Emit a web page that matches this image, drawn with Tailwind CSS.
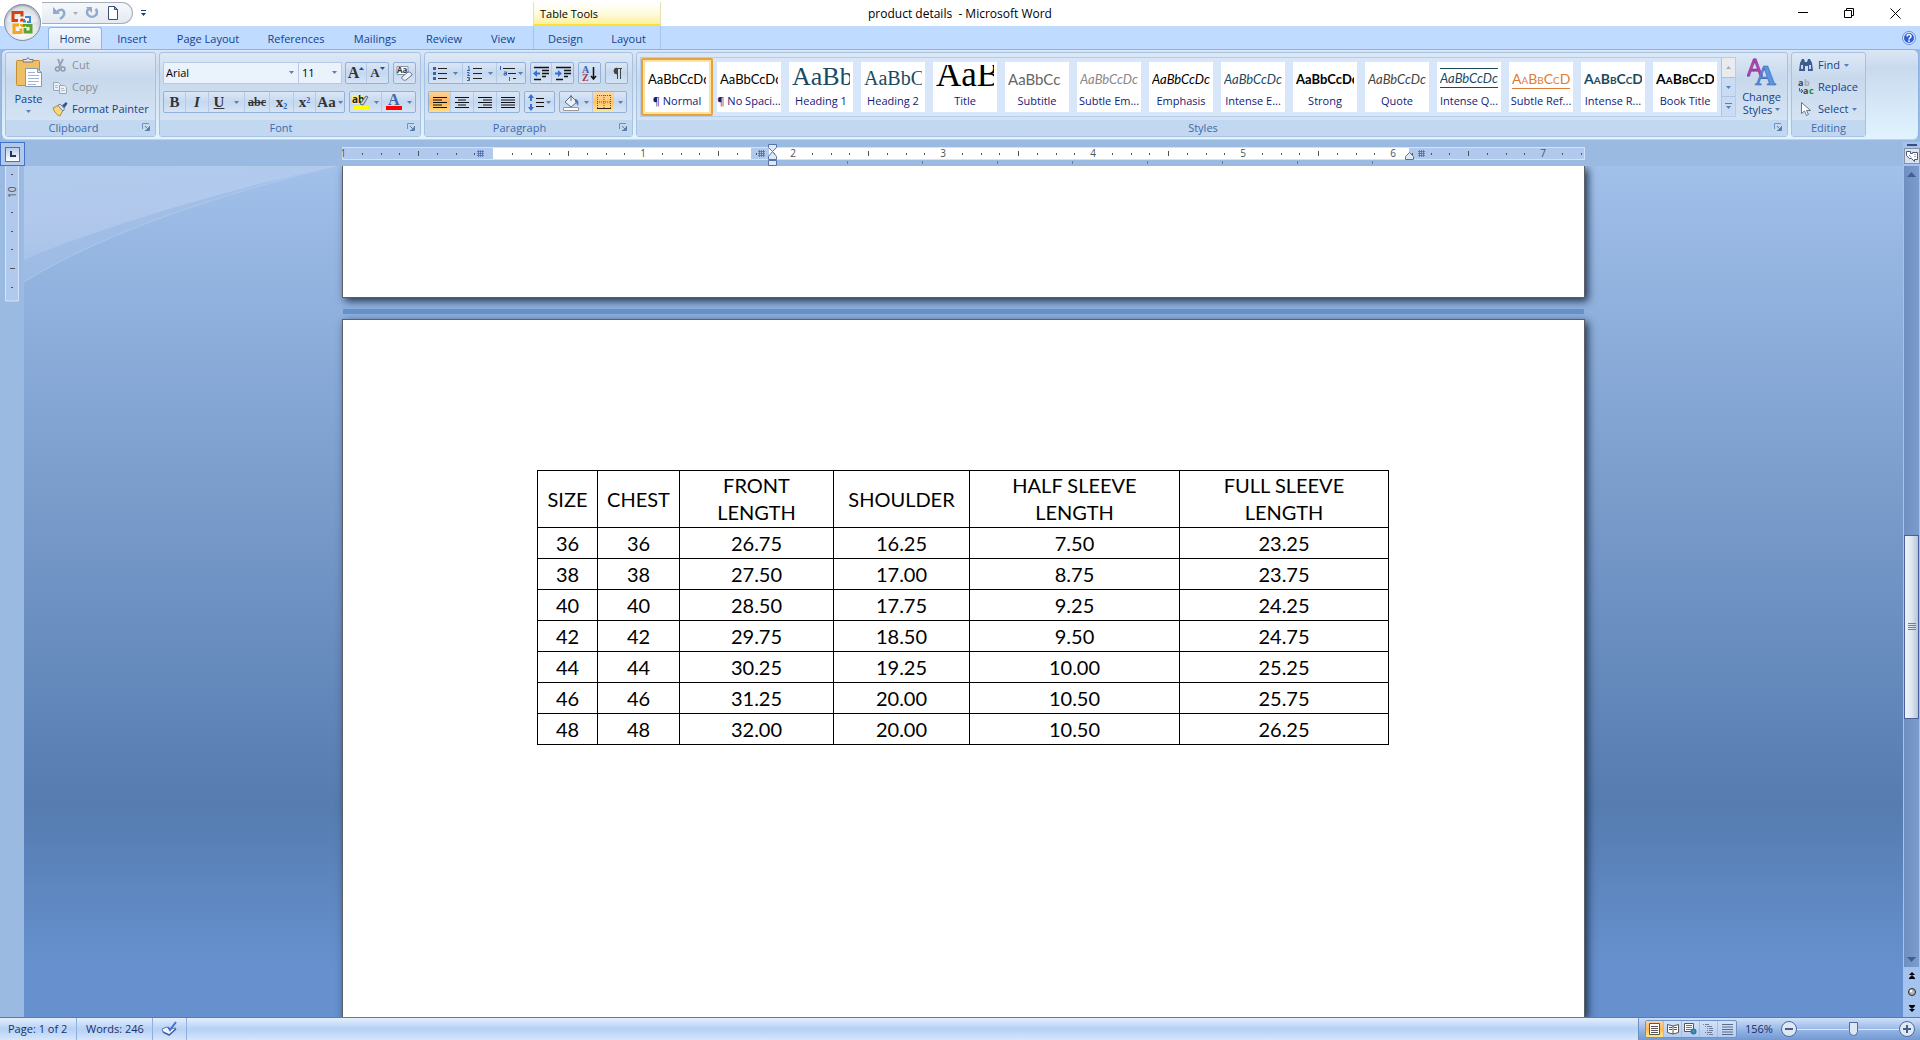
<!DOCTYPE html>
<html lang="en">
<head>
    <meta charset="UTF-8">
    <meta name="viewport" content="width=device-width, initial-scale=1.0">
    <title>product details - Microsoft Word</title>
    <script src="https://cdn.jsdelivr.net/npm/@tailwindcss/browser@4"></script>
</head>
<body class="h-screen flex flex-col overflow-hidden bg-[#9bbae2] font-['Open_Sans','Noto_Sans',sans-serif] text-[11px] leading-4 text-[#15428b]">

    <!-- shared symbols -->
    <svg class="hidden">
        <symbol id="down" viewBox="0 0 5 3"><path d="M0 0h5L2.5 3z" fill="#5a7fb5"/></symbol>
        <symbol id="launch" viewBox="0 0 8 8"><path d="M.5 6V.5H7" fill="none" stroke="#6f93c0"/><path d="M3 3l3 3M7.5 3v4.500H3" fill="none" stroke="#5b7da8"/><path d="M7 4v3H4z" fill="#5b7da8"/></symbol>
        <symbol id="grid" viewBox="0 0 7 7"><path d="M1.500 0v7M3.500 0v7M5.500 0v7M0 1.500h7M0 3.500h7M0 5.500h7" stroke="#4c6fa8" stroke-width=".8" fill="none"/></symbol>
    </svg>

    <!-- title bar -->
    <header class="relative h-[26px] shrink-0 flex bg-white text-black">
        <div class="w-[533px] flex items-center pl-[42px] pt-[2px] pb-[2px]">
            <div class="h-[22px] w-[91px] pl-[10px] flex items-center gap-[7px] rounded-r-full border border-l-0 border-[#a5adb9] bg-gradient-to-b from-[#f6f8fb] to-[#e4eaf2]">
                <button aria-label="Undo"><svg width="14" height="14" viewBox="0 0 14 14"><path d="M5 7c1-4 6-4 7-1 1 3-1 5-4 7" fill="none" stroke="#91a9cc" stroke-width="2.500"/><path d="M1 1v7h7z" fill="#91a9cc"/></svg></button>
                <button aria-label="Undo history"><svg width="5" height="3"><path d="M0 0h5L2.500 3z" fill="#a8adb5"/></svg></button>
                <button aria-label="Repeat"><svg width="14" height="14" viewBox="0 0 14 14"><path d="M10.500 3a5 4.500 0 1 1-7 0" fill="none" stroke="#91a9cc" stroke-width="2.500"/><path d="M7 1v6L1 1z" fill="#91a9cc"/></svg></button>
                <button aria-label="New"><svg width="14" height="14" viewBox="0 0 14 14"><path d="M2.500.5h6l3 3v10h-9z" fill="#fff" stroke="#3b4f73"/><path d="M8.500.5v3h3z" fill="#9fb4d4" stroke="#3b4f73"/></svg></button>
            </div>
            <button aria-label="Customize Quick Access Toolbar" class="ml-2"><svg width="5" height="7"><path d="M0 .5h5" stroke="#1b3a78"/><path d="M0 3h5L2.500 6z" fill="#1b3a78"/></svg></button>
        </div>
        <div class="w-[128px] mt-[2px] pl-[6px] pt-[2px] flex items-center border-x border-[#e6e0b4] border-b-2 border-b-[#fbe32c] bg-gradient-to-b from-white via-[#fffbe0] to-[#fdf0a0]">Table Tools</div>
        <h1 class="absolute inset-x-0 top-[6px] text-center text-[12px] pointer-events-none">product details &nbsp;- Microsoft Word</h1>
        <div class="ml-auto mr-[2px] flex">
            <button aria-label="Minimize" class="w-[46px] flex items-center justify-center"><svg width="10" height="10"><path d="M0 4.500h10" stroke="#000"/></svg></button>
            <button aria-label="Restore" class="w-[46px] flex items-center justify-center"><svg width="10" height="10"><path d="M.5 2.500h7v7h-7zM2.500 2.500v-2h7v7h-2" fill="none" stroke="#000"/></svg></button>
            <button aria-label="Close" class="w-[46px] flex items-center justify-center"><svg width="11" height="11"><path d="M.5.5l10 10M10.500.5l-10 10" stroke="#000"/></svg></button>
        </div>
        <button aria-label="Office" class="absolute left-[3px] top-[3px] z-10">
            <svg width="39" height="39" viewBox="0 0 39 39">
                <defs><radialGradient id="orb" cx=".5" cy=".75" r=".8"><stop offset="0" stop-color="#fff"/><stop offset=".5" stop-color="#e3e6eb"/><stop offset="1" stop-color="#a3aab6"/></radialGradient></defs>
                <circle cx="19.500" cy="19.500" r="18" fill="url(#orb)" stroke="#7f8b9d"/>
                <path d="M4 19a15.500 15.500 0 0 1 31 0z" fill="#fff" opacity=".45"/>
                <g fill="none" stroke-width="3">
                    <path d="M15 17.500h-5v-8h9v4" stroke="#d9420e"/>
                    <path d="M22 14h5v5h-3" stroke="#3f86d8" stroke-width="2"/>
                    <path d="M17 17.500h2v-2" stroke="#d9420e" stroke-width="2"/>
                    <path d="M21 16v2.500h2" stroke="#3f86d8" stroke-width="2"/>
                    <path d="M16 22h-5v7.500h7v-4" stroke="#f5a61d"/>
                    <path d="M17 22h2v2" stroke="#f5a61d" stroke-width="2"/>
                    <path d="M23 22.500h5v6.500h-6v-4" stroke="#5aa62c"/>
                    <path d="M21 24v-2h2" stroke="#5aa62c" stroke-width="2"/>
                </g>
            </svg>
        </button>
    </header>

    <!-- tabs -->
    <nav class="h-[23px] shrink-0 flex items-stretch pl-[48px] pr-[4px] bg-[#bfdbff]">
        <a href="#" class="w-[54px] mt-px pt-px z-10 flex items-center justify-center rounded-t-[3px] border border-b-0 border-[#8fb4e6] bg-gradient-to-b from-[#f4f8fd] to-[#dfe9f6]">Home</a>
        <a href="#" class="w-[60px] pt-[2px] flex items-center justify-center">Insert</a>
        <a href="#" class="w-[92px] pt-[2px] flex items-center justify-center">Page Layout</a>
        <a href="#" class="w-[84px] pt-[2px] flex items-center justify-center">References</a>
        <a href="#" class="w-[74px] pt-[2px] flex items-center justify-center">Mailings</a>
        <a href="#" class="w-[64px] pt-[2px] flex items-center justify-center">Review</a>
        <a href="#" class="w-[54px] pt-[2px] flex items-center justify-center">View</a>
        <div class="flex ml-[3px]">
            <a href="#" class="w-[64px] pt-[2px] flex items-center justify-center border-l border-[#a9c4ea]">Design</a>
            <a href="#" class="w-[64px] pt-[2px] flex items-center justify-center border-r border-[#a9c4ea]">Layout</a>
        </div>
        <button aria-label="Help" class="ml-auto"><svg width="14" height="14" viewBox="0 0 14 14"><circle cx="7" cy="7" r="6.500" fill="#dfeaff" stroke="#6d8fd0"/><circle cx="7" cy="7" r="5" fill="#2a5fd8"/><path d="M5 5.500c0-2.500 4-2.500 4-.2C9 7 7 6.700 7 8.500M7 9.300v1.600" stroke="#fff" stroke-width="1.500" fill="none"/></svg></button>
    </nav>

    <!-- ribbon -->
    <main class="shrink-0 mx-px flex gap-[3px] pt-[2px] pb-[2px] pl-[3px] pr-[52px] rounded-md border border-t-[#8db2e3] border-x-[#8db2e3] border-b-[#a5dfee] bg-gradient-to-b from-[#dbe6f4] via-[#c9daee] via-20% to-[#e2f3ff]">

        <section class="w-[151px] shrink-0 flex flex-col rounded-[3px] border border-[#a7c2e0] bg-gradient-to-b from-[#dde8f5] via-[#c8d9ed] via-30% to-[#d9e7f6]">
            <div class="h-[67px] flex">
                <button class="w-[45px] pt-[4px] flex flex-col items-center">
                    <svg width="28" height="31" viewBox="0 0 28 31"><rect x="1.500" y="3.500" width="23" height="25" rx="1" fill="#eebf66" stroke="#c48e35"/><path d="M8 5V2.500h3.500L13 .5l1.500 2H18V5z" fill="#e4e6e8" stroke="#777"/><path d="M10.500 11.500h12l4 4v14h-16z" fill="#fff" stroke="#8798b5"/><path d="M13 15.500h7M13 18.500h11M13 21.500h11M13 24.500h11M13 27.500h8" stroke="#a3b4d0"/><path d="M22.500 11.500v4h4z" fill="#d2dcec" stroke="#8798b5"/></svg>
                    <span class="mt-[3px]">Paste</span>
                    <svg width="5" height="3" class="mt-[3px]"><use href="#down"/></svg>
                </button>
                <div class="flex-1 pt-px flex flex-col">
                    <button class="h-[22px] flex items-center gap-[4px] pl-[1px] text-[#8b8f97]"><svg width="16" height="16" viewBox="0 0 16 16"><path d="M6 2l3 8M11 2L7 10" stroke="#9aa3b3" stroke-width="2" fill="none"/><circle cx="5.500" cy="12" r="2" fill="none" stroke="#8e99ae" stroke-width="1.500"/><circle cx="11" cy="12" r="2" fill="none" stroke="#8e99ae" stroke-width="1.500"/></svg>Cut</button>
                    <button class="h-[22px] flex items-center gap-[4px] pl-[1px] text-[#8b8f97]"><svg width="16" height="16" viewBox="0 0 16 16"><path d="M1.500 3.500h5l2 2v6h-7z" fill="#eceff4" stroke="#9aa5b8"/><path d="M7.500 6.500h5l2 2v6h-7z" fill="#eceff4" stroke="#9aa5b8"/><path d="M9 9.500h3M9 11.500h4M3 6.500h3M3 8.500h3" stroke="#b3bccb"/></svg>Copy</button>
                    <button class="h-[22px] flex items-center gap-[4px] pl-[1px] whitespace-nowrap"><svg width="16" height="16" viewBox="0 0 16 16"><path d="M1 7l6-3 4 5-3 6c-3-1-6-4-7-8z" fill="#f7d878" stroke="#b28b36"/><path d="M6 4.500l2-1.500 4.500 5L11 10z" fill="#e9eef5" stroke="#6e7e96"/><path d="M10 4.500L14 1l1.500 1.500L12.500 7z" fill="#35558f"/></svg>Format Painter</button>
                </div>
            </div>
            <div class="h-[16px] relative pr-[14px] text-center bg-[#c1d8f0] text-[#3e6aaa]">Clipboard<button aria-label="Clipboard options" class="absolute right-[5px] top-[3px]"><svg width="8" height="8"><use href="#launch"/></svg></button></div>
        </section>

        <section class="w-[262px] shrink-0 flex flex-col rounded-[3px] border border-[#a7c2e0] bg-gradient-to-b from-[#dde8f5] via-[#c8d9ed] via-30% to-[#d9e7f6]">
            <div class="h-[67px] pl-[3px] pt-[9px] flex flex-col gap-[7px]">
                <div class="flex h-[22px]">
                    <label class="relative w-[136px]"><span class="sr-only">Font</span>
                        <select class="appearance-none w-full h-full pl-[2px] border border-[#b6cbe8] bg-[#eaf2fb] text-black"><option>Arial</option></select>
                        <svg width="5" height="3" class="absolute right-[5px] top-[9px]"><use href="#down"/></svg></label>
                    <label class="relative w-[43px]"><span class="sr-only">Font size</span>
                        <select class="appearance-none w-full h-full pl-[3px] border border-l-0 border-[#b6cbe8] bg-[#eaf2fb] text-black"><option>11</option></select>
                        <svg width="5" height="3" class="absolute right-[5px] top-[9px]"><use href="#down"/></svg></label>
                    <div class="ml-[3px] flex rounded-[2px] border border-[#93b1d8] divide-x divide-[#b4cae6] bg-gradient-to-b from-[#dbe7f6] via-[#c5d8ef] to-[#d6e4f5]">
                        <button aria-label="Grow font" class="w-[21px] flex items-center justify-center font-['Liberation_Serif',serif] font-bold text-[16px] text-[#333]">A<svg width="5" height="3" class="mb-2.5"><path d="M0 3h5L2.500 0z" fill="#234f9e"/></svg></button>
                        <button aria-label="Shrink font" class="w-[21px] flex items-center justify-center font-['Liberation_Serif',serif] font-bold text-[13px] text-[#333]">A<svg width="5" height="3" class="mb-2.5"><path d="M0 0h5L2.500 3z" fill="#234f9e"/></svg></button>
                    </div>
                    <button aria-label="Clear formatting" class="ml-[4px] w-[23px] flex items-center justify-center rounded-[2px] border border-[#93b1d8] bg-gradient-to-b from-[#dbe7f6] via-[#c5d8ef] to-[#d6e4f5]"><svg width="17" height="17" viewBox="0 0 17 17"><path d="M1 1.500h11v8H1z" fill="#fff" stroke="#8794a8"/><text x="1" y="8" font-size="8" font-weight="bold" fill="#333">Aa</text><path d="M6 12l6-5c2 0 4 1 4 3l-6 5c-2 1-5-1-4-3z" fill="#f0f2f7" stroke="#66728c"/></svg></button>
                </div>
                <div class="flex h-[22px] text-[#333]">
                    <div class="flex rounded-[2px] border border-[#93b1d8] divide-x divide-[#b4cae6] font-['Liberation_Serif',serif] text-[15px] bg-gradient-to-b from-[#dbe7f6] via-[#c5d8ef] to-[#d6e4f5]">
                        <button aria-label="Bold" class="w-[22px] font-bold">B</button>
                        <button aria-label="Italic" class="w-[23px] italic font-bold">I</button>
                        <button aria-label="Underline" class="w-[36px] flex items-center justify-center gap-[10px]"><u class="font-bold">U</u><svg width="5" height="3"><use href="#down"/></svg></button>
                        <button aria-label="Strikethrough" class="w-[25px] line-through font-bold text-[12px]">abc</button>
                        <button aria-label="Subscript" class="w-[24px] font-bold">x<sub class="text-[8px] text-[#2a5fc0]">2</sub></button>
                        <button aria-label="Superscript" class="w-[22px] font-bold">x<sup class="text-[8px] text-[#2a5fc0]">2</sup></button>
                        <button aria-label="Change case" class="w-[28px] flex items-center justify-center gap-[2px] font-bold">Aa<svg width="5" height="3"><use href="#down"/></svg></button>
                    </div>
                    <div class="ml-[4px] flex rounded-[2px] border border-[#93b1d8] divide-x divide-[#b4cae6] bg-gradient-to-b from-[#dbe7f6] via-[#c5d8ef] to-[#d6e4f5]">
                        <button aria-label="Highlight" class="w-[32px] flex items-center justify-center gap-[4px]"><svg width="18" height="18" viewBox="0 0 18 18"><path d="M0 2h11v9H0z" fill="#f6f08a"/><text x="0" y="10" font-size="10" font-weight="bold" fill="#222">ab</text><path d="M8 11l6-8 2 1-5 8z" fill="#c9d3e2" stroke="#5b6a80"/><path d="M1 13h16v4H1z" fill="#ff0"/></svg><svg width="5" height="3"><use href="#down"/></svg></button>
                        <button aria-label="Font color" class="w-[33px] flex items-center justify-center gap-[5px]"><svg width="16" height="18" viewBox="0 0 16 18"><text x="2" y="12" font-size="16" font-weight="bold" font-family="Liberation Serif" fill="#3c67a8">A</text><path d="M0 13h16v4H0z" fill="#f00"/></svg><svg width="5" height="3"><use href="#down"/></svg></button>
                    </div>
                </div>
            </div>
            <div class="h-[16px] relative pr-[18px] text-center bg-[#c1d8f0] text-[#3e6aaa]">Font<button aria-label="Font options" class="absolute right-[5px] top-[3px]"><svg width="8" height="8"><use href="#launch"/></svg></button></div>
        </section>

        <section class="w-[209px] shrink-0 flex flex-col rounded-[3px] border border-[#a7c2e0] bg-gradient-to-b from-[#dde8f5] via-[#c8d9ed] via-30% to-[#d9e7f6]">
            <div class="h-[67px] pl-[3px] pt-[9px] flex flex-col gap-[7px]">
                <div class="flex h-[22px] gap-[4px]">
                    <div class="flex rounded-[2px] border border-[#93b1d8] divide-x divide-[#b4cae6] bg-gradient-to-b from-[#dbe7f6] via-[#c5d8ef] to-[#d6e4f5]">
                        <button aria-label="Bullets" class="w-[34px] flex items-center justify-center gap-[6px]"><svg width="14" height="15"><path d="M5 2.500h9M5 7.500h9M5 12.500h9" stroke="#222"/><path d="M0 1h3v3H0zM0 6h3v3H0zM0 11h3v3H0z" fill="#3a62ad"/></svg><svg width="5" height="3"><use href="#down"/></svg></button>
                        <button aria-label="Numbering" class="w-[34px] flex items-center justify-center gap-[6px]"><svg width="15" height="15"><path d="M6 2.500h9M6 7.500h9M6 12.500h9" stroke="#222"/><path d="M1 .5h1v3.500M0 4.500h3M0 6.500h2v1L.5 9.500H3M0 11.500h2.500v3H0M1 13h1" stroke="#3a62ad" fill="none"/></svg><svg width="5" height="3"><use href="#down"/></svg></button>
                        <button aria-label="Multilevel list" class="w-[28px] flex items-center justify-center gap-[1px]"><svg width="18" height="15"><path d="M4 2.500h12M9 7.500h8M14 12.500h3" stroke="#222"/><path d="M1.500 0v4M5 6h2.500v3H5V7.500h2M10.500 11v4" stroke="#3a62ad" fill="none"/></svg><svg width="5" height="3"><use href="#down"/></svg></button>
                    </div>
                    <div class="flex rounded-[2px] border border-[#93b1d8] divide-x divide-[#b4cae6] bg-gradient-to-b from-[#dbe7f6] via-[#c5d8ef] to-[#d6e4f5]">
                        <button aria-label="Decrease indent" class="w-[21px] flex items-center justify-center"><svg width="16" height="15"><path d="M1 1.500h15M9 4.500h7M9 7.500h7M9 10.500h4M1 13.500h7" stroke="#111" stroke-width="1.500"/><path d="M0 7.500L4 4v2.500h3v2H4V11z" fill="#3a6fd0"/></svg></button>
                        <button aria-label="Increase indent" class="w-[21px] flex items-center justify-center"><svg width="16" height="15"><path d="M1 1.500h15M9 4.500h7M9 7.500h7M9 10.500h4M1 13.500h7" stroke="#111" stroke-width="1.500"/><path d="M7 7.500L3 4v2.500H0v2h3V11z" fill="#3a6fd0"/></svg></button>
                    </div>
                    <button aria-label="Sort" class="w-[23px] flex items-center justify-center rounded-[2px] border border-[#93b1d8] bg-gradient-to-b from-[#dbe7f6] via-[#c5d8ef] to-[#d6e4f5]"><svg width="15" height="17" viewBox="0 0 15 17"><text x="0" y="8" font-size="10" font-weight="bold" font-family="Liberation Serif" fill="#3a62ad">A</text><text x="0" y="16" font-size="10" font-weight="bold" font-family="Liberation Serif" fill="#b03050">Z</text><path d="M11.500 2v11M9 11l2.500 3 2.500-3" stroke="#111" fill="none" stroke-width="1.500"/></svg></button>
                    <button aria-label="Show marks" class="w-[23px] flex items-center justify-center rounded-[2px] border border-[#93b1d8] bg-gradient-to-b from-[#dbe7f6] via-[#c5d8ef] to-[#d6e4f5]"><svg width="10" height="13"><path d="M5 1a3 3 0 0 0 0 6z" fill="#444" stroke="#444"/><path d="M4 1.500h6M5.500 1v11M8.500 1v11" stroke="#444"/></svg></button>
                </div>
                <div class="flex h-[22px] gap-[4px]">
                    <div class="flex rounded-[2px] border border-[#93b1d8] divide-x divide-[#b4cae6] bg-gradient-to-b from-[#dbe7f6] via-[#c5d8ef] to-[#d6e4f5]">
                        <button aria-label="Align left" class="w-[22px] flex items-center justify-center bg-gradient-to-b from-[#fbd49b] via-[#ffb24c] to-[#fde08a]"><svg width="14" height="13"><path d="M0 1.500h14M0 4h9M0 6.500h14M0 9h9M0 11.500h14" stroke="#111"/></svg></button>
                        <button aria-label="Center" class="w-[23px] flex items-center justify-center"><svg width="14" height="13"><path d="M0 1.500h14M3 4h8M0 6.500h14M3 9h8M0 11.500h14" stroke="#111"/></svg></button>
                        <button aria-label="Align right" class="w-[23px] flex items-center justify-center"><svg width="14" height="13"><path d="M0 1.500h14M5 4h9M0 6.500h14M5 9h9M0 11.500h14" stroke="#111"/></svg></button>
                        <button aria-label="Justify" class="w-[22px] flex items-center justify-center"><svg width="14" height="13"><path d="M0 1.500h14M0 4h14M0 6.500h14M0 9h14M0 11.500h14" stroke="#111"/></svg></button>
                    </div>
                    <button aria-label="Line spacing" class="w-[31px] flex items-center justify-center gap-[2px] rounded-[2px] border border-[#93b1d8] bg-gradient-to-b from-[#dbe7f6] via-[#c5d8ef] to-[#d6e4f5]"><svg width="16" height="17"><path d="M3 3v4M3 10v4" stroke="#3a6fd0" stroke-width="2"/><path d="M0 4l3-4 3 4zM0 13l3 4 3-4z" fill="#3a6fd0"/><path d="M8 4.500h8M8 8.500h8M8 12.500h8" stroke="#111"/></svg><svg width="5" height="3"><use href="#down"/></svg></button>
                    <div class="flex rounded-[2px] border border-[#93b1d8] divide-x divide-[#b4cae6] bg-gradient-to-b from-[#dbe7f6] via-[#c5d8ef] to-[#d6e4f5]">
                        <button aria-label="Shading" class="w-[33px] flex items-center justify-center gap-[4px]"><svg width="17" height="17"><path d="M2 8l6-6 6 6-6 5z" fill="#eef2f8" stroke="#5c6b86"/><path d="M8 1v6" stroke="#5c6b86"/><path d="M12 5c3 0 4 3 3 7-1-1-1-3-3-4z" fill="#4a78c0"/><path d="M.5 13.500h15v3H.5z" fill="#fff" stroke="#999"/></svg><svg width="5" height="3"><use href="#down"/></svg></button>
                        <button aria-label="Borders" class="w-[33px] flex items-stretch"><span class="w-[21px] flex items-center justify-center bg-gradient-to-b from-[#fcd9a4] via-[#ffc266] to-[#fde79a]"><svg width="14" height="14"><path d="M.5 0v14M7 0v14M13.500 0v14M0 .5h14M0 7h14" stroke="#7b5b20" stroke-dasharray="1 1"/><path d="M0 13.500h14" stroke="#222"/></svg></span><span class="flex-1 flex items-center justify-center"><svg width="5" height="3"><use href="#down"/></svg></span></button>
                    </div>
                </div>
            </div>
            <div class="h-[16px] relative pr-[18px] text-center bg-[#c1d8f0] text-[#3e6aaa]">Paragraph<button aria-label="Paragraph options" class="absolute right-[5px] top-[3px]"><svg width="8" height="8"><use href="#launch"/></svg></button></div>
        </section>

        <section class="flex-1 min-w-0 flex flex-col rounded-[3px] border border-[#a7c2e0] bg-gradient-to-b from-[#dde8f5] via-[#c8d9ed] via-30% to-[#d9e7f6]">
            <div class="h-[67px] pl-[3px] flex">
                <div class="flex-1 min-w-0 mt-[4px] h-[60px] flex border border-[#b5cdea] bg-[#d7e6f8]">
                    <div id="gallery" class="flex-1 min-w-0 flex overflow-hidden"></div>
                    <div class="w-[14px] flex flex-col border-l border-[#a9c3e6] divide-y divide-[#a9c3e6] bg-[#cadcf3]">
                        <button aria-label="Scroll up" class="flex-1 flex items-center justify-center bg-[#e9ebee]"><svg width="5" height="3"><path d="M0 3h5L2.500 0z" fill="#a9adb3"/></svg></button>
                        <button aria-label="Scroll down" class="flex-1 flex items-center justify-center"><svg width="5" height="3"><use href="#down"/></svg></button>
                        <button aria-label="More styles" class="flex-1 flex items-center justify-center"><svg width="7" height="7"><path d="M0 .5h7" stroke="#5a7fb5"/><path d="M1 3h5L3.500 6z" fill="#5a7fb5"/></svg></button>
                    </div>
                </div>
                <button class="w-[51px] pt-[5px] flex flex-col items-center leading-[13px]">
                    <svg width="30" height="29" viewBox="0 0 30 29"><text x="0" y="18" font-size="23" font-family="Liberation Sans" fill="#b84fc0" stroke="#8c2f98" stroke-width=".8">A</text><text x="8" y="27" font-size="29" font-family="Liberation Serif" font-weight="bold" fill="#5f94e2" stroke="#2e62b4" stroke-width=".6">A</text></svg>
                    <span class="mt-[3px]">Change</span>
                    <span class="flex items-center gap-[3px]">Styles <svg width="5" height="3"><use href="#down"/></svg></span>
                </button>
            </div>
            <div class="h-[16px] relative pr-[18px] text-center bg-[#c1d8f0] text-[#3e6aaa]">Styles<button aria-label="Styles options" class="absolute right-[5px] top-[3px]"><svg width="8" height="8"><use href="#launch"/></svg></button></div>
        </section>

        <section class="w-[75px] shrink-0 flex flex-col rounded-[3px] border border-[#a7c2e0] bg-gradient-to-b from-[#dde8f5] via-[#c8d9ed] via-30% to-[#d9e7f6]">
            <div class="h-[67px] pl-[6px] pt-px flex flex-col">
                <button class="h-[22px] flex items-center gap-[4px]"><svg width="16" height="16" viewBox="0 0 16 16"><path d="M2 6l2-4h2l1 3h2l1-3h2l2 4 1 8h-5V9H7v5H1z" fill="#3c5c92"/><path d="M3 8h2v4H3zM11 8h2v4h-2z" fill="#c8d7ee"/></svg>Find<svg width="5" height="3"><use href="#down"/></svg></button>
                <button class="h-[22px] flex items-center gap-[4px]"><svg width="16" height="16" viewBox="0 0 16 16"><text x="0" y="7" font-size="9" font-weight="bold" fill="#444">a</text><text x="6" y="7" font-size="9" font-weight="bold" fill="#aaa">b</text><text x="5" y="15" font-size="9" font-weight="bold" fill="#444">a</text><text x="11" y="15" font-size="9" font-weight="bold" fill="#1c8a2a">c</text><path d="M1.500 9v3H4M3 10l2 2-2 2" stroke="#3a62ad" fill="none"/></svg>Replace</button>
                <button class="h-[22px] flex items-center gap-[4px]"><svg width="16" height="16" viewBox="0 0 16 16"><path d="M3.500 1.500v11l3-2.500 2 4.500 2-1-2-4h4z" fill="#fff" stroke="#6a7488"/></svg>Select<svg width="5" height="3"><use href="#down"/></svg></button>
            </div>
            <div class="h-[16px] text-center bg-[#c1d8f0] text-[#3e6aaa]">Editing</div>
        </section>
    </main>

    <!-- horizontal ruler -->
    <div class="h-[24px] mt-[2px] shrink-0 flex bg-[#9bbae2]">
        <button aria-label="Tab selector" class="w-[25px] flex items-center justify-center border border-[#4472c8] bg-[#b2c9ee]"><span class="w-[15px] h-[15px] flex items-center justify-center border border-[#4472c8] bg-gradient-to-b from-[#b9cbe8] to-white"><svg width="6" height="6"><path d="M1 0v5h5" stroke="#1f355f" stroke-width="2" fill="none"/></svg></span></button>
        <div class="flex-1 flex justify-center">
            <svg id="ruler" width="1244" height="24" viewBox="0 0 1244 24" font-size="10" fill="#4d5358" text-anchor="middle">
                <path d="M.5 5.500h1242v12H.5z" fill="#b2c9ee" stroke="#d3e2f8"/>
                <path d="M151 6h258v11H151zM427 6h640v11H427z" fill="#fff"/>
            </svg>
        </div>
        <div class="w-[17px] flex flex-col items-center bg-[#a5c3ef]">
            <div class="w-[10px] h-[2px] mt-[2px] bg-[#3b4f7c]"></div>
            <button aria-label="View ruler" class="w-[16px] h-[16px] mt-[2px] flex items-center justify-center border border-[#8792ad] bg-[#dbe2ee]"><svg width="12" height="12"><path d="M.5 1.500h4v2h2v-1h5v7h-3v2l-3-3h-2l-3-3z" fill="#fff" stroke="#4b5a80"/><path d="M3 5l3 3M9 4v3" stroke="#4b5a80" stroke-dasharray="1 1"/></svg></button>
        </div>
    </div>

    <!-- document area -->
    <div class="flex-1 min-h-0 flex">
        <div class="w-[24px] shrink-0 flex justify-center">
            <svg id="side-ruler" width="14" height="136" font-size="10" fill="#4d5358">
                <path d="M.5 -1v136h13V-1z" fill="#b2c9ee" stroke="#d3e2f8"/>
            </svg>
        </div>
        <div class="relative flex-1 min-w-0 overflow-hidden bg-gradient-to-b from-[#a1c0ea] from-0% via-[#567cb0] via-75% to-[#6691ce] to-94%">
            <svg class="absolute left-0 top-0" width="312" height="118">
                <defs><linearGradient id="sweep" x2=".3" y2="1"><stop offset="0" stop-color="#b0cbed"/><stop offset=".5" stop-color="#b2c9ec"/><stop offset="1" stop-color="#a7c2e8"/></linearGradient></defs>
                <path d="M0 0H312C210 22 80 60 0 94z" fill="url(#sweep)"/>
                <path d="M0 94C80 60 210 22 312 0 200 27 80 66 0 116z" fill="#a5c2e8" opacity=".5"/>
                <path d="M0 116C80 66 200 27 312 0" fill="none" stroke="#b9d0ef" opacity=".6"/>
            </svg>
            <div class="relative mx-auto w-full max-w-[1243px] h-full flex flex-col">
                <div class="h-[132px] shrink-0 bg-white border border-t-0 border-[#5c6066] shadow-[3px_3px_8px_#1f3350]"></div>
                <div class="h-[5px] mt-[11px] mb-[5px] mx-px shrink-0 bg-[#6490cb] z-10"></div>
                <article class="flex-1 pl-[194px] pr-[195px] pt-[150px] bg-white border border-b-0 border-[#5c6066] shadow-[3px_3px_8px_#1f3350]">
                    <table class="w-full table-fixed border-collapse text-center text-black font-['Lato',sans-serif] text-[20px] leading-[27px]">
                        <colgroup>
                            <col class="w-[60px]"><col class="w-[82px]"><col class="w-[154px]"><col class="w-[136px]"><col class="w-[210px]"><col class="w-[209px]">
                        </colgroup>
                        <thead>
                            <tr class="h-[57px]">
                                <th class="border border-black p-0 font-normal">SIZE</th>
                                <th class="border border-black p-0 font-normal">CHEST</th>
                                <th class="border border-black p-0 font-normal">FRONT<br>LENGTH</th>
                                <th class="border border-black p-0 font-normal">SHOULDER</th>
                                <th class="border border-black p-0 font-normal">HALF SLEEVE<br>LENGTH</th>
                                <th class="border border-black p-0 font-normal">FULL SLEEVE<br>LENGTH</th>
                            </tr>
                        </thead>
                        <tbody id="sizes"></tbody>
                    </table>
                </article>
            </div>
        </div>
        <!-- scroll bar -->
        <div class="w-[17px] shrink-0 flex flex-col items-center bg-[#a5c3ef]">
            <div class="flex-1 w-[15px] flex flex-col items-center bg-gradient-to-r from-[#6f8fc0] to-[#7b9cce]">
                <button aria-label="Scroll up" class="h-[16px]"><svg width="9" height="5"><path d="M0 5h9L4.500 0z" fill="#3f5f96"/></svg></button>
                <div class="flex-[354]"></div>
                <div class="flex-[182] w-[15px] flex items-center justify-center border border-[#4a5f9a] bg-gradient-to-r from-[#eef2f6] via-[#dfe8ef] to-[#b2c6da]"><svg width="8" height="8"><path d="M0 .5h8M0 2.500h8M0 4.500h8M0 6.500h8" stroke="#74808f"/></svg></div>
                <div class="flex-[233]"></div>
                <button aria-label="Scroll down" class="h-[16px]"><svg width="9" height="5"><path d="M0 0h9L4.500 5z" fill="#3f5f96"/></svg></button>
            </div>
            <div class="h-[50px] flex flex-col items-center justify-around">
                <button aria-label="Previous page"><svg width="6" height="7" class="block"><path d="M0 3h6L3 0zM0 6h6L3 3zM0 6h6v1H0z"/></svg></button>
                <button aria-label="Browse object"><svg width="8" height="8" class="block"><circle cx="4" cy="4" r="3.500" fill="#b5b5b5" stroke="#222"/><circle cx="3" cy="3" r="1.200" fill="#fff"/></svg></button>
                <button aria-label="Next page"><svg width="6" height="7" class="block"><path d="M0 0h6v1H0zM0 1h6L3 4zM0 4h6L3 7z"/></svg></button>
            </div>
        </div>
    </div>

    <!-- status bar -->
    <footer class="h-[23px] shrink-0 flex items-stretch border-t border-[#567db0] text-[#17306b] bg-gradient-to-b from-[#e4eefc] via-[#b5d1f5] via-50% to-[#d7e6fb]">
        <span class="w-[77px] pl-[8px] flex items-center border-r border-[#8fb0dc]">Page: 1 of 2</span>
        <span class="w-[76px] pl-[9px] flex items-center border-r border-[#8fb0dc]">Words: 246</span>
        <button aria-label="Proofing" class="w-[34px] flex items-center justify-center border-r border-[#8fb0dc]"><svg width="17" height="16"><path d="M1 8l5-2 3 2 6-1-6 7-7-3z" fill="#f2f4f8" stroke="#5f77a6"/><path d="M2 11l6 3 7-6" fill="none" stroke="#4567b0" stroke-width="1.500"/><path d="M7 6l2 3 6-8" fill="none" stroke="#3d72d6" stroke-width="2"/></svg></button>
        <div class="ml-auto w-[282px] pl-[6px] flex items-center border-l border-[#6d8fc2] bg-gradient-to-b from-[#cfe0f8] via-[#8fb1e3] via-60% to-[#7399d2]">
            <div class="flex h-[18px] rounded-[2px] border border-[#6f93c8] divide-x divide-[#a4bfe4] bg-gradient-to-b from-[#d3e2f7] to-[#b5cdf0]">
                <button aria-label="Print layout" class="w-[18px] flex items-center justify-center bg-gradient-to-b from-[#f7d5a0] via-[#ffb84d] to-[#fde58a]"><svg width="11" height="12"><path d="M.5.5h10v11H.5z" fill="#fff" stroke="#555"/><path d="M2 3.500h7M2 5.500h7M2 7.500h7M2 9.500h7" stroke="#555"/></svg></button>
                <button aria-label="Full screen reading" class="w-[18px] flex items-center justify-center"><svg width="12" height="12"><path d="M.5 1.500L6 3l5.500-1.500v8L6 11 .5 9.500zM6 3v8" fill="#fff" stroke="#555"/><path d="M2 4.500h3M2 6.500h3M7 4.500h3M7 6.500h3" stroke="#555"/></svg></button>
                <button aria-label="Web layout" class="w-[18px] flex items-center justify-center"><svg width="13" height="12"><path d="M.5.5h9v8h-9z" fill="#fff" stroke="#555"/><path d="M2 2.500h6M2 4.500h6M2 6.500h6" stroke="#777"/><circle cx="9.500" cy="8.500" r="3" fill="#2f74b8"/><path d="M8 8l2-1 1 2-2 1z" fill="#4cae4f"/></svg></button>
                <button aria-label="Outline" class="w-[18px] flex items-center justify-center"><svg width="11" height="11"><path d="M0 .5h1M2 .5h4M2 2.500h1M4 2.500h5M4 4.500h1M6 4.500h4M4 6.500h1M6 6.500h4M2 8.500h1M4 8.500h5M4 10.500h1M6 10.500h4" stroke="#6d7d99"/></svg></button>
                <button aria-label="Draft" class="w-[18px] flex items-center justify-center"><svg width="11" height="11"><path d="M0 .5h11M0 3h11M0 5.500h11M0 8h11M0 10.500h11" stroke="#5c6c88"/></svg></button>
            </div>
            <span class="w-[28px] ml-[8px]">156%</span>
            <button aria-label="Zoom out" class="ml-[8px]"><svg width="16" height="16"><circle cx="8" cy="8" r="7.500" fill="#dde7f5" stroke="#4e6b9c"/><path d="M4 8h8" stroke="#4b5f82" stroke-width="2"/></svg></button>
            <input type="range" aria-label="Zoom" min="0" max="100" value="56" class="w-[102px] h-[16px] appearance-none bg-[linear-gradient(#dce8f9,#dce8f9)] bg-[length:100%_1px] bg-center bg-no-repeat [&::-webkit-slider-thumb]:appearance-none [&::-webkit-slider-thumb]:w-[9px] [&::-webkit-slider-thumb]:h-[14px] [&::-webkit-slider-thumb]:rounded-b-[5px] [&::-webkit-slider-thumb]:border [&::-webkit-slider-thumb]:border-[#4e6b9c] [&::-webkit-slider-thumb]:bg-[#dce7f6]">
            <button aria-label="Zoom in"><svg width="16" height="16"><circle cx="8" cy="8" r="7.500" fill="#dde7f5" stroke="#4e6b9c"/><path d="M4 8h8M8 4v8" stroke="#4b5f82" stroke-width="2"/></svg></button>
        </div>
    </footer>

    <script>
        const body_font = "font-['Lato',sans-serif] text-[13px] leading-[28px]"
        const caps_font = "font-['Lato',sans-serif] text-[14px] leading-[28px] [font-variant:small-caps]"
        const styles = [
            ['¶ Normal', 'AaBbCcDc', body_font + ' text-black'],
            ['¶ No Spaci...', 'AaBbCcDc', body_font + ' text-black'],
            ['Heading 1', 'AaBb', "font-['Liberation_Serif',serif] text-[26px] leading-[24px] text-[#1a4a63]"],
            ['Heading 2', 'AaBbC', "font-['Liberation_Serif',serif] text-[20px] leading-[26px] text-[#1a4a63]"],
            ['Title', 'AaB', "font-['Liberation_Serif',serif] text-[35px] leading-[20px] text-black"],
            ['Subtitle', 'AaBbCc', "font-['Lato',sans-serif] text-[15px] leading-[28px] text-[#666]"],
            ['Subtle Em...', 'AaBbCcDc', body_font + ' italic text-[#888]'],
            ['Emphasis', 'AaBbCcDc', body_font + ' italic text-black'],
            ['Intense E...', 'AaBbCcDc', body_font + ' italic text-[#1a4a63]'],
            ['Strong', 'AaBbCcDc', body_font + ' font-bold text-black'],
            ['Quote', 'AaBbCcDc', body_font + ' italic text-[#444]'],
            ['Intense Q...', 'AaBbCcDc', "font-['Lato',sans-serif] text-[13px] leading-[18px] mt-[3px] border-y border-[#1a4a63] italic text-[#1a4a63]"],
            ['Subtle Ref...', 'AaBbCcDd', caps_font + ' underline underline-offset-4 text-[#e07b35]'],
            ['Intense R...', 'AaBbCcDd', caps_font + ' font-bold text-[#1a4a63]'],
            ['Book Title', 'AaBbCcDd', caps_font + ' font-bold text-black'],
        ]
        document.getElementById('gallery').innerHTML = styles.map(([name, sample, look], i) => `
            <button class="w-[72px] shrink-0 h-[58px] ${i === 0 ? 'p-[2px] rounded-[2px] border-2 border-[#e9a13b] bg-[#fce29a]' : 'p-[4px]'}">
                <span class="h-full flex flex-col items-center bg-white">
                    <span class="w-[58px] mt-[3px] h-[28px] overflow-hidden text-left whitespace-nowrap"><span class="block ${look}">${sample}</span></span>
                    <span class="text-[#10207a] whitespace-nowrap">${name}</span>
                </span>
            </button>`).join('')

        const sizes = [
            ['36', '36', '26.75', '16.25', '7.50', '23.25'],
            ['38', '38', '27.50', '17.00', '8.75', '23.75'],
            ['40', '40', '28.50', '17.75', '9.25', '24.25'],
            ['42', '42', '29.75', '18.50', '9.50', '24.75'],
            ['44', '44', '30.25', '19.25', '10.00', '25.25'],
            ['46', '46', '31.25', '20.00', '10.50', '25.75'],
            ['48', '48', '32.00', '20.00', '10.50', '26.25'],
        ]
        document.getElementById('sizes').innerHTML = sizes.map(row =>
            '<tr class="h-[31px]">' + row.map(v => `<td class="border border-black p-0">${v}</td>`).join('') + '</tr>').join('')

        // one inch is 150px, a tick every eighth; the margin starts at 151
        let marks = ''
        for (let i = -8; i <= 58; i++) {
            const x = Math.round(151 + i * 18.75)
            if (i % 8 === 0) {
                if (i !== 0) marks += `<text x="${x}" y="15">${Math.abs(i / 8)}</text>`
            } else if (i % 4 === 0) {
                marks += `<path d="M${x} 9h1v5h-1z"/>`
            } else {
                marks += `<path d="M${x} 11h1v2h-1z"/>`
            }
        }
        for (let x = 505; x < 1040; x += 75) marks += `<path d="M${x} 19h1v3h-1z" opacity=".6"/>`
        for (const x of [135, 416, 1076]) marks += `<rect x="${x - 1}" y="7" width="9" height="9" fill="#b2c9ee"/><use href="#grid" x="${x}" y="8" width="7" height="7"/>`
        marks += '<path d="M426.500 2.500h8v3l-4 4-4-4zM430.500 9.500l4 5v3h-8v-3zM426.500 18.500h8v5h-8z" fill="#dfe8f5" stroke="#5272a8"/>'
        marks += '<path d="M1067.500 10.500l4 4v3h-8v-3z" fill="#dfe8f5" stroke="#5272a8"/>'
        document.getElementById('ruler').innerHTML += marks

        let side = '<text x="11" y="32" transform="rotate(-90 11 32)">10</text>'
        for (const y of [8, 46, 65, 83, 121]) side += `<path d="M6 ${y}h2v1H6z"/>`
        side += '<path d="M5 102h5v1H5z"/>'
        document.getElementById('side-ruler').innerHTML += side
    </script>
</body>
</html>
